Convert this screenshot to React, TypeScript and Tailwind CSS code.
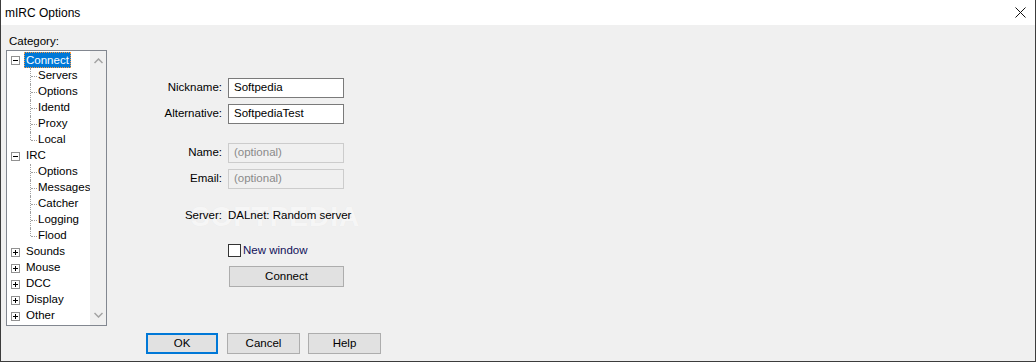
import React from "react";

type Node = { label: string; level: 0 | 1; expand?: "minus" | "plus"; selected?: boolean; last?: boolean };

const tree: Node[] = [
  { label: "Connect", level: 0, expand: "minus", selected: true },
  { label: "Servers", level: 1 },
  { label: "Options", level: 1 },
  { label: "Identd", level: 1 },
  { label: "Proxy", level: 1 },
  { label: "Local", level: 1, last: true },
  { label: "IRC", level: 0, expand: "minus" },
  { label: "Options", level: 1 },
  { label: "Messages", level: 1 },
  { label: "Catcher", level: 1 },
  { label: "Logging", level: 1 },
  { label: "Flood", level: 1, last: true },
  { label: "Sounds", level: 0, expand: "plus" },
  { label: "Mouse", level: 0, expand: "plus" },
  { label: "DCC", level: 0, expand: "plus" },
  { label: "Display", level: 0, expand: "plus" },
  { label: "Other", level: 0, expand: "plus" },
];

const ExpandBox = ({ kind }: { kind: "minus" | "plus" }) => (
  <div className="relative w-[9px] h-[9px] border border-[#919191] bg-white shrink-0">
    <div className="absolute left-[1px] top-[3px] w-[5px] h-px bg-black" />
    {kind === "plus" && <div className="absolute left-[3px] top-[1px] w-px h-[5px] bg-black" />}
  </div>
);

const TreeRow = ({ node }: { node: Node }) => {
  if (node.level === 0) {
    return (
      <div className="h-[16px] flex items-center pl-[4px]">
        {node.expand && <ExpandBox kind={node.expand} />}
        <span
          className={
            node.selected
              ? "ml-[4px] px-[2px] h-[16px] leading-[16px] bg-[#0078d7] text-white outline outline-1 outline-dotted outline-[#ff9a3c] -outline-offset-1"
              : "ml-[6px]"
          }
        >
          {node.label}
        </span>
      </div>
    );
  }
  return (
    <div className="h-[16px] flex items-center">
      <div className="relative w-[30px] h-[16px] shrink-0">
        <div
          className={`absolute left-[23px] top-0 w-px border-l border-dotted border-[#a0a0a0] ${
            node.last ? "h-[8px]" : "h-[16px]"
          }`}
        />
        <div className="absolute left-[24px] top-[8px] w-[6px] border-t border-dotted border-[#a0a0a0]" />
      </div>
      <span className="ml-[1px]">{node.label}</span>
    </div>
  );
};

const Button = ({ children, primary, className }: { children: React.ReactNode; primary?: boolean; className?: string }) => (
  <div
    className={`flex items-center justify-center bg-[#e1e1e1] ${
      primary ? "border-2 border-[#0078d7]" : "border border-[#adadad]"
    } ${className ?? ""}`}
  >
    {children}
  </div>
);

const Field = ({ label, value, disabled }: { label: string; value: string; disabled?: boolean }) => (
  <div className="flex items-center h-[20px]">
    <span className="w-[116px] text-right pr-[1px]">{label}</span>
    <div
      className={`ml-[5px] w-[116px] h-[20px] flex items-center px-[5px] border ${
        disabled ? "bg-[#f0f0f0] border-[#cccccc] text-[#8a8a8a]" : "bg-white border-[#7a7a7a]"
      }`}
    >
      {value}
    </div>
  </div>
);

export default function App() {
  return (
    <div
      className="w-[1036px] h-[362px] flex flex-col bg-[#f0f0f0] border-l border-r border-b border-[#3c3c3c] text-[11.5px] text-black"
      style={{ fontFamily: '"Liberation Sans", Arial, sans-serif' }}
    >
      <div className="h-[25px] bg-white flex items-center justify-between pl-[4px] pr-[9px]">
        <span className="text-[12px]">mIRC Options</span>
        <svg width="11" height="11" viewBox="0 0 11 11">
          <path d="M0.5 0.5L10.5 10.5M10.5 0.5L0.5 10.5" stroke="#111" strokeWidth="1" />
        </svg>
      </div>

      <div className="flex flex-1">
        <div className="pl-[5px] pt-[9px] flex flex-col">
          <span className="pl-[3px] h-[16px] leading-[15px]">Category:</span>
          <div className="w-[101px] h-[276px] border border-[#828790] bg-white flex">
            <div className="flex-1 pt-[1px]">
              {tree.map((n, i) => (
                <TreeRow key={i} node={n} />
              ))}
            </div>
            <div className="w-[16px] bg-[#f0f0f0] flex flex-col items-center justify-between py-[7px]">
              <svg width="9" height="6" viewBox="0 0 9 6">
                <path d="M0.5 5L4.5 1L8.5 5" fill="none" stroke="#a3a3a3" strokeWidth="1.5" />
              </svg>
              <svg width="9" height="6" viewBox="0 0 9 6">
                <path d="M0.5 1L4.5 5L8.5 1" fill="none" stroke="#a3a3a3" strokeWidth="1.5" />
              </svg>
            </div>
          </div>
        </div>

        <div className="flex flex-col pt-[53px]">
          <Field label="Nickname:" value="Softpedia" />
          <div className="mt-[6px]">
            <Field label="Alternative:" value="SoftpediaTest" />
          </div>
          <div className="mt-[19px]">
            <Field label="Name:" value="(optional)" disabled />
          </div>
          <div className="mt-[6px]">
            <Field label="Email:" value="(optional)" disabled />
          </div>
          <div className="relative mt-[19px] flex items-center h-[16px]">
            <span className="absolute left-[84px] top-[-5px] text-[28px] leading-[28px] font-bold tracking-[1px] text-white/70 [text-shadow:0_0_1px_rgba(0,0,0,0.05)] pointer-events-none">
              SOFTPEDIA
            </span>
            <span className="relative w-[116px] text-right pr-[1px]">Server:</span>
            <span className="relative ml-[5px]">DALnet: Random server</span>
          </div>
          <div className="mt-[20px] ml-[121px] flex items-center h-[13px]">
            <div className="w-[13px] h-[13px] border border-[#333] bg-white shrink-0" />
            <span className="ml-[2px] text-[#10105a]">New window</span>
          </div>
          <Button className="mt-[9px] ml-[122px] w-[115px] h-[21px]">Connect</Button>
        </div>
      </div>

      <div className="flex h-[28px] pl-[145px] items-start">
        <Button primary className="w-[72px] h-[21px]">OK</Button>
        <Button className="ml-[9px] w-[73px] h-[21px]">Cancel</Button>
        <Button className="ml-[8px] w-[73px] h-[21px]">Help</Button>
      </div>
    </div>
  );
}
